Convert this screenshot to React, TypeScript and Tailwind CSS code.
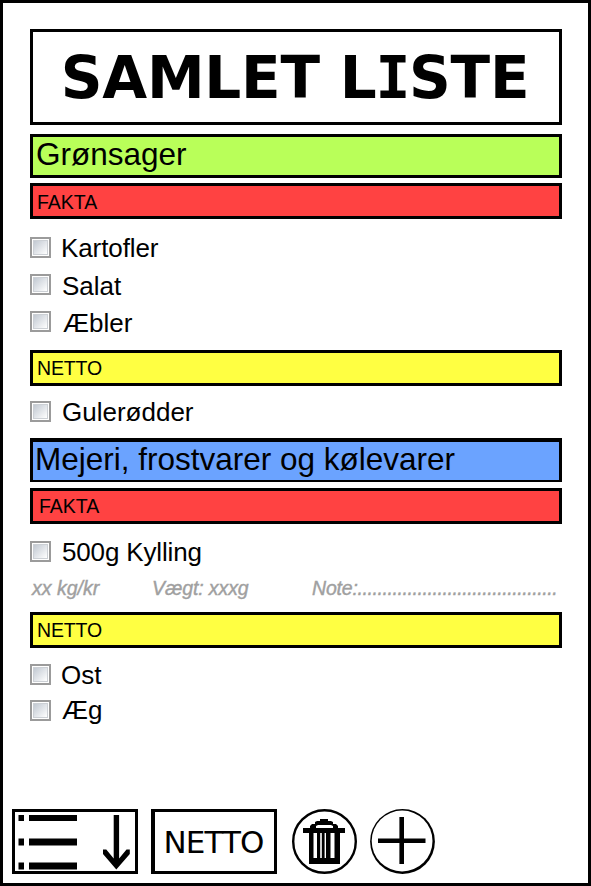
const sans = "font-['Liberation_Sans',Arial,sans-serif]";

function Item({ label, space, indent = 'pl-[11px]', lift = '-mt-[2px]' }: { label: string; space: string; indent?: string; lift?: string }) {
  return (
    <div className={`flex items-start h-[21px] ${space}`}>
      <span className="w-[21px] h-[21px] shrink-0 border-2 border-[#9b9b9b] bg-white p-px">
        <span className="block h-full w-full border border-[#ccd0d5] bg-gradient-to-br from-[#c2c9d2] to-[#ffffff]" />
      </span>
      <span className={`text-[26px] leading-[26px] ${lift} ${indent}`}>{label}</span>
    </div>
  );
}

function Category({ label, className }: { label: string; className: string }) {
  return <div className={`h-[44px] border-black text-[31.5px] leading-[34px] ${className}`}>{label}</div>;
}

function Store({ label, className }: { label: string; className: string }) {
  return <div className={`h-[36px] border-[3px] border-black text-[19.5px] leading-[22px] ${className}`}>{label}</div>;
}

export default function App() {
  return (
    <div className={`w-[591px] h-[886px] border-[3px] border-black bg-white text-black whitespace-nowrap ${sans}`}>
      <main className="ml-[27px] mt-[26px] w-[532px] h-[780px]">
        <h1 className="h-[96px] border-[3px] border-black pr-[2px] text-center font-['DejaVu_Sans',sans-serif] text-[58px] font-bold leading-[93px] tracking-[-0.25px]">
          SAMLET L<span className="-mx-[1px] font-['DejaVu_Sans_Mono',monospace]">I</span>STE
        </h1>
        <Category label="Grønsager" className="mt-[9px] border-[3px] bg-[#b9ff59] pl-[3px]" />
        <Store label="FAKTA" className="mt-[5px] bg-[#ff4242] pt-[5px] pl-[4px]" />
        <Item label="Kartofler" space="mt-[18px]" indent="pl-[10px] tracking-[-0.1px]" />
        <Item label="Salat" space="mt-[16px]" lift="-mt-px" />
        <Item label="Æbler" space="mt-[16px]" indent="pl-[12px]" lift="-mt-px" />
        <Store label="NETTO" className="mt-[18px] bg-[#ffff42] pt-[4px] pl-[4px] tracking-[-0.15px]" />
        <Item label="Gulerødder" space="mt-[15px]" />
        <Category label="Mejeri, frostvarer og kølevarer" className="mt-[16px] border-x-[3px] border-t-4 border-b-2 bg-[#6ba3ff] pl-[2px]" />
        <Store label="FAKTA" className="mt-[6px] bg-[#ff4242] pt-[4px] pl-[6px]" />
        <Item label="500g Kylling" space="mt-[17px]" indent="pl-[11px] tracking-[-0.15px]" />
        <div className="mt-[14px] flex h-[24px] items-center text-[19.5px] italic leading-[24px] text-[#a0a0a0] [-webkit-text-stroke:0.4px_#a0a0a0]">
          <span className="w-[122px] pl-[2px]">xx kg/kr</span>
          <span className="w-[160px] tracking-[-0.1px]">Vægt: xxxg</span>
          <span className="tracking-[-0.2px]">Note:</span>
          <span className="tracking-[-0.43px]">........................................</span>
        </div>
        <Store label="NETTO" className="mt-[12px] bg-[#ffff42] pt-[4px] pl-[4px] tracking-[-0.15px]" />
        <Item label="Ost" space="mt-[16px]" indent="pl-[10px]" />
        <Item label="Æg" space="mt-[15px]" indent="pl-[11px]" lift="-mt-[3px]" />
      </main>
      <footer className="ml-[9px] flex h-[65px]">
        <button className="h-[65px] w-[126px] border-[3px] border-black" aria-label="Sorter">
          <svg width="120" height="59" viewBox="15 812 120 59" className="block">
            <g fill="black">
              <path d="M18.5 815h5.5v6h-5.5zM29 815h48v6H29zM18.5 838.5h5.5v7h-5.5zM29 838.5h48v7H29zM18.5 862.5h5.5v7h-5.5zM29 862.5h48v7H29z" />
              <path d="M113.7 815h5.4v43.5l7.4-9h3.3v4.5l-13.5 15.5-13.3-15.5v-4.5h3.3l7.4 9z" />
            </g>
          </svg>
        </button>
        <button className="ml-[13px] h-[65px] w-[126px] border-[3px] border-l-4 border-black pr-[2px] font-['DejaVu_Sans',sans-serif] text-[31px] leading-[60px] tracking-[-0.9px]">
          NETTO
        </button>
        <button className="ml-[15px]" aria-label="Slet">
          <svg width="65" height="65" viewBox="292 809 65 65" className="block">
            <circle cx="324.5" cy="841.5" r="31.3" fill="white" stroke="black" strokeWidth="2.4" />
            <path fillRule="evenodd" d="M303 828h7v-2l2-2h3v-2l2-1h3v-2h8v2h3l2 1v2h3l2 2v2h7v5h-5v31h-31v-31h-6zM316 828h17v-2l-2-1h-13l-2 1zM313.5 833v25h3.5v-25zM320.2 833v25h1.6v-25zM324.6 833v25h1.4v-25zM330.5 833v25h4v-25z" />
          </svg>
        </button>
        <button className="ml-[13px]" aria-label="Tilføj">
          <svg width="65" height="65" viewBox="370 809 65 65" className="block">
            <circle cx="402.5" cy="841.5" r="32.4" />
            <circle cx="402.1" cy="841" r="30.4" fill="white" />
            <path d="M378 840.7h47.5M401.7 817v47" stroke="black" strokeWidth="4.6" />
          </svg>
        </button>
      </footer>
    </div>
  );
}
